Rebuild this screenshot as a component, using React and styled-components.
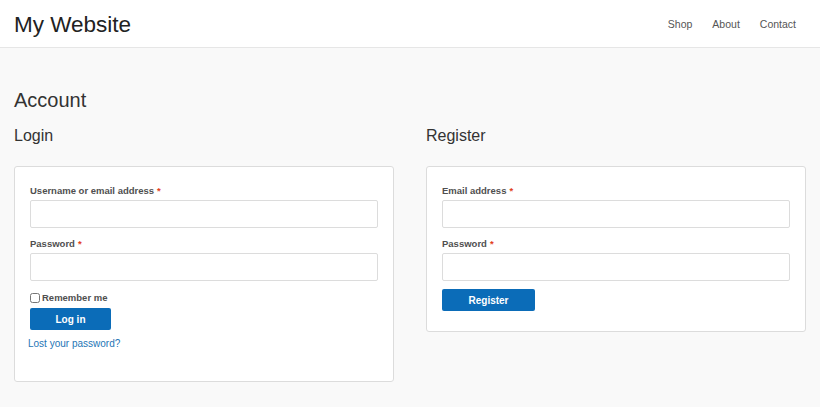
import React from 'react';
import styled, { createGlobalStyle } from 'styled-components';

const GlobalStyle = createGlobalStyle`
  * { box-sizing: border-box; }
  body {
    margin: 0;
    background: #f9f9f9;
    font-family: "Liberation Sans", Arial, Helvetica, sans-serif;
    color: #333;
  }
`;

const Header = styled.header`
  height: 48px;
  background: #fff;
  border-bottom: 1px solid #e6e6e6;
  display: flex;
  align-items: center;
  justify-content: space-between;
  padding: 0 24px 0 14px;
`;

const Brand = styled.div`
  font-size: 22.5px;
  color: #222;
  padding-top: 2px;
`;

const Nav = styled.nav`
  display: flex;
  gap: 20px;
  font-size: 10.5px;
  color: #555;
`;

const Main = styled.main`
  padding: 40px 14px 0;
`;

const PageTitle = styled.h1`
  margin: 0 0 14px;
  font-size: 20px;
  font-weight: 400;
  color: #333;
  line-height: 24px;
`;

const Columns = styled.div`
  display: grid;
  grid-template-columns: 1fr 1fr;
  gap: 32px;
  align-items: start;
`;

const SectionTitle = styled.h2`
  margin: 0 0 20px;
  font-size: 16px;
  font-weight: 400;
  color: #333;
  line-height: 20px;
`;

const Card = styled.form`
  background: #fff;
  border: 1px solid #dcdcdc;
  border-radius: 3px;
  padding: 17px 15px ${p => (p.$tall ? '32px' : '20px')};
  display: flex;
  flex-direction: column;
`;

const Field = styled.div`
  display: flex;
  flex-direction: column;
  gap: 3px;
  margin-bottom: ${p => p.$gap ?? 9}px;
`;

const Label = styled.label`
  font-size: 9.5px;
  font-weight: 700;
  color: #4f4f4f;
  line-height: 13px;
`;

const Required = styled.span`
  color: #e2401c;
  margin-left: 3px;
`;

const Input = styled.input`
  height: 28px;
  width: 100%;
  border: 1px solid #dcdcdc;
  border-radius: 2px;
  background: #fff;
  outline: none;
`;

const Remember = styled.label`
  display: flex;
  align-items: center;
  gap: 2px;
  font-size: 9.5px;
  font-weight: 700;
  color: #4f4f4f;
  margin: 2px 0 5px;
  input {
    margin: 0;
    width: 10px;
    height: 10px;
  }
`;

const Button = styled.button`
  align-self: flex-start;
  width: ${p => p.$w}px;
  height: 22px;
  border: none;
  border-radius: 2px;
  background: #0b6cb8;
  color: #fff;
  font-family: inherit;
  font-size: 10px;
  font-weight: 700;
  cursor: pointer;
`;

const LostLink = styled.a`
  margin: 8px 0 0 -2px;
  font-size: 10px;
  color: #2475b5;
  text-decoration: none;
`;

export default function App() {
  return (
    <>
      <GlobalStyle />
      <Header>
        <Brand>My Website</Brand>
        <Nav>
          <span>Shop</span>
          <span>About</span>
          <span>Contact</span>
        </Nav>
      </Header>
      <Main>
        <PageTitle>Account</PageTitle>
        <Columns>
          <section>
            <SectionTitle>Login</SectionTitle>
            <Card $tall onSubmit={e => e.preventDefault()}>
              <Field>
                <Label>Username or email address<Required>*</Required></Label>
                <Input type="text" />
              </Field>
              <Field>
                <Label>Password<Required>*</Required></Label>
                <Input type="password" />
              </Field>
              <Remember>
                <input type="checkbox" />
                Remember me
              </Remember>
              <Button $w={81}>Log in</Button>
              <LostLink href="#">Lost your password?</LostLink>
            </Card>
          </section>
          <section>
            <SectionTitle>Register</SectionTitle>
            <Card onSubmit={e => e.preventDefault()}>
              <Field>
                <Label>Email address<Required>*</Required></Label>
                <Input type="email" />
              </Field>
              <Field $gap={8}>
                <Label>Password<Required>*</Required></Label>
                <Input type="password" />
              </Field>
              <Button $w={93}>Register</Button>
            </Card>
          </section>
        </Columns>
      </Main>
    </>
  );
}
